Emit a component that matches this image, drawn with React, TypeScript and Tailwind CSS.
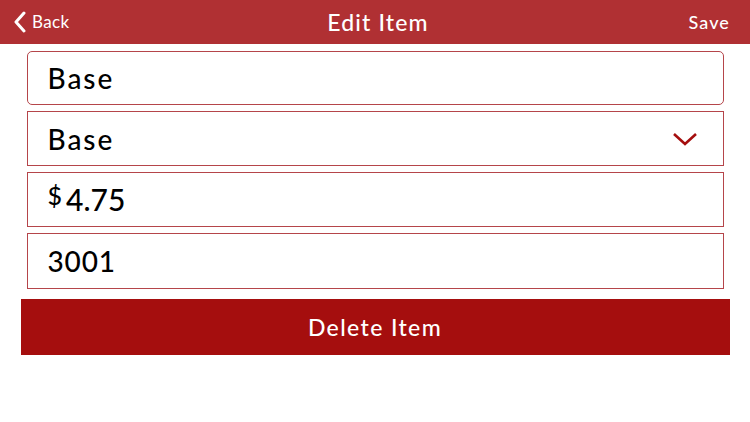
const lato = { fontFamily: 'Lato, "Open Sans", sans-serif' };

export default function App() {
    return (
        <div className="w-[750px] h-[422px] bg-white" style={lato}>
            <header className="h-[44px] bg-[#b03033] flex items-center justify-between px-[12px] text-white">
                <button type="button" className="flex items-center gap-[5px] text-[17px] tracking-[0.02em] w-[90px]">
                    <svg width="14" height="22" viewBox="0 0 14 22" className="ml-[1px]">
                        <path d="M11 2 L3 11 L11 20" fill="none" stroke="white" strokeWidth="3" strokeLinecap="round" strokeLinejoin="round" />
                    </svg>
                    Back
                </button>
                <h1 className="text-[23px] font-medium tracking-[0.05em] pl-[6px]">Edit Item</h1>
                <button type="button" className="text-[18px] font-medium tracking-[0.06em] w-[90px] text-right pr-[8px]">Save</button>
            </header>

            <div className="flex flex-col items-center pt-[7px]">
                <div className="w-[697px] h-[54px] border border-[#b5454a] rounded-[5px] flex items-center px-[20px] text-[28px] font-medium tracking-[0.07em] text-black">
                    Base
                </div>
                <div className="mt-[6px] w-[697px] h-[55px] border border-[#b5454a] flex items-center justify-between px-[20px] text-[28px] font-medium tracking-[0.07em] text-black">
                    Base
                    <svg width="26" height="14" viewBox="0 0 26 14" className="mr-[5px]">
                        <path d="M2 2 L13 12 L24 2" fill="none" stroke="#a50e0e" strokeWidth="2.6" />
                    </svg>
                </div>
                <div className="mt-[6px] w-[697px] h-[55px] border border-[#b5454a] flex items-center px-[20px] text-black font-medium">
                    <span className="text-[25px] -mt-[8px] mr-[4px]">$</span>
                    <span className="text-[30px]">4.75</span>
                </div>
                <div className="mt-[6px] w-[697px] h-[56px] border border-[#b5454a] flex items-center px-[20px] text-[28px] font-medium tracking-[0.03em] text-black">
                    3001
                </div>
                <button type="button" className="mt-[10px] w-[709px] h-[56px] bg-[#a50e0e] text-white text-[23px] font-medium tracking-[0.06em]">
                    Delete Item
                </button>
            </div>
        </div>
    );
}
